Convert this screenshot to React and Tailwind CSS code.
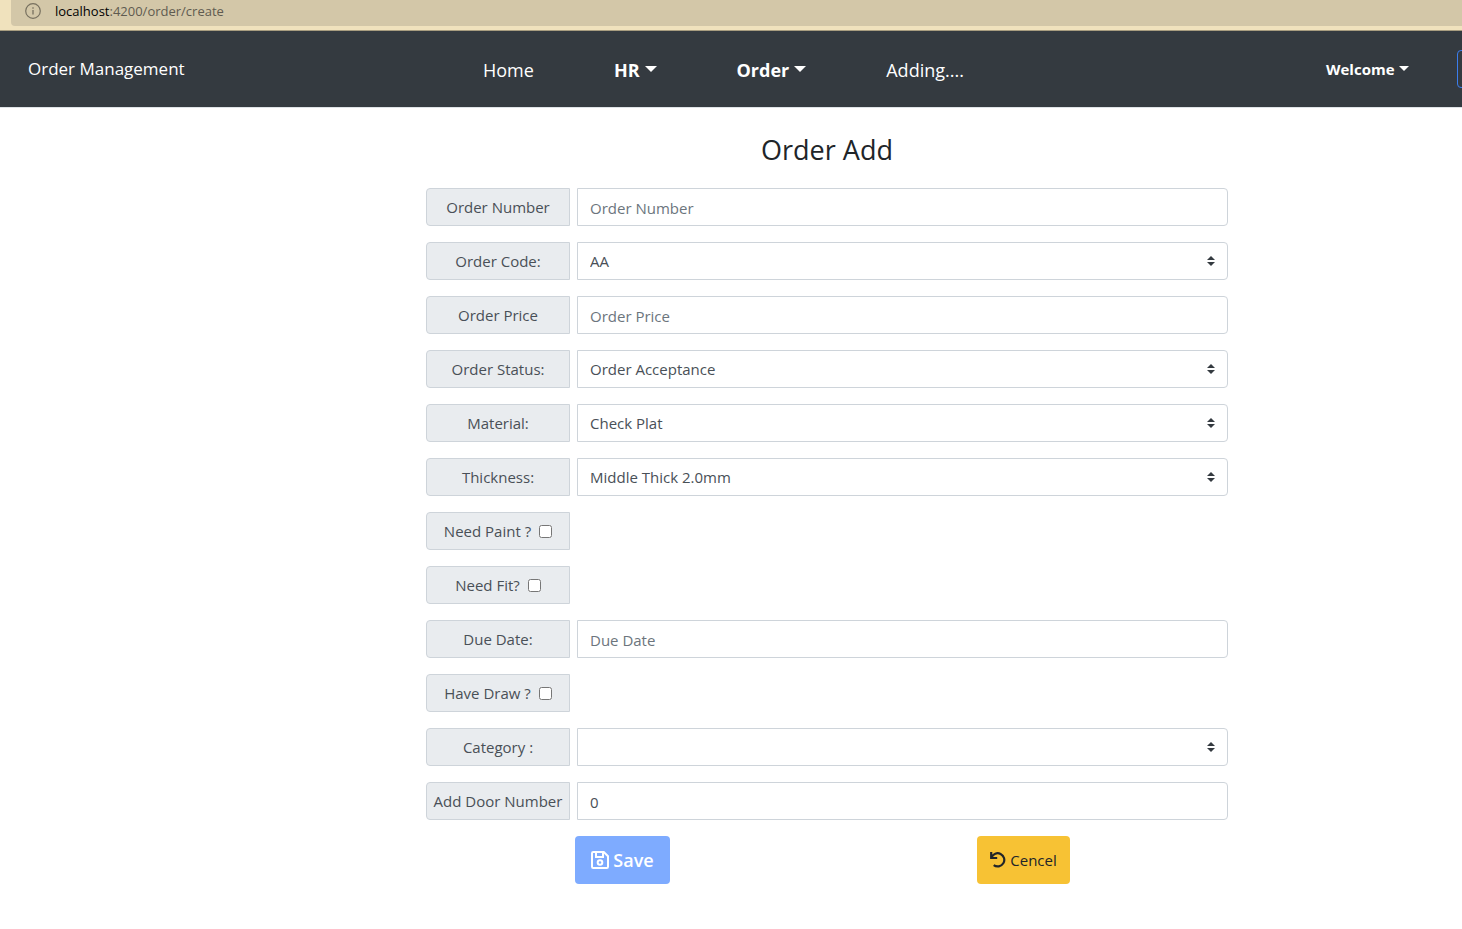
import React from "react";

const fields = [
  { id: "orderNumber", label: "Order Number", type: "text", placeholder: "Order Number" },
  { id: "orderCode", label: "Order Code:", type: "select", options: ["AA"] },
  { id: "orderPrice", label: "Order Price", type: "text", placeholder: "Order Price" },
  { id: "orderStatus", label: "Order Status:", type: "select", options: ["Order Acceptance"] },
  { id: "material", label: "Material:", type: "select", options: ["Check Plat"] },
  { id: "thickness", label: "Thickness:", type: "select", options: ["Middle Thick 2.0mm"] },
  { id: "needPaint", label: "Need Paint ?", type: "checkbox" },
  { id: "needFit", label: "Need Fit?", type: "checkbox" },
  { id: "dueDate", label: "Due Date:", type: "text", placeholder: "Due Date" },
  { id: "haveDraw", label: "Have Draw ?", type: "checkbox" },
  { id: "category", label: "Category :", type: "select", options: [""] },
  { id: "doorNumber", label: "Add Door Number", type: "text", value: "0" },
];

const labelClass =
  "flex h-full w-36 shrink-0 items-center justify-center whitespace-nowrap rounded-l border border-[#ced4da] bg-[#e9ecef] text-[#495057]";
const controlClass =
  "h-full w-full appearance-none rounded-r border border-[#ced4da] bg-white px-3 text-[#495057] placeholder:text-[#6c757d] placeholder:opacity-100";

function Caret({ className }) {
  return (
    <svg viewBox="0 0 10 5" className={className} fill="currentColor" aria-hidden="true">
      <path d="M0 0h10L5 5z" />
    </svg>
  );
}

function SaveIcon() {
  return (
    <svg viewBox="0 0 18 18" className="size-[18px]" fill="none" stroke="currentColor" strokeWidth="2" aria-hidden="true">
      <path d="M2.2 1h10.6L17 5.2v10.6a1.2 1.2 0 0 1-1.2 1.2H2.2A1.2 1.2 0 0 1 1 15.800V2.200A1.200 1.200 0 0 1 2.200 1z" />
      <path d="M5 1v5h7V1" />
      <circle cx="9" cy="11.500" r="2.300" />
    </svg>
  );
}

function UndoIcon() {
  return (
    <svg viewBox="0 0 16 16" className="size-4" fill="none" stroke="currentColor" strokeWidth="2.200" aria-hidden="true">
      <path d="M1.200 0v6h6" />
      <path d="M1.500 5.500A6.600 6.600 0 1 1 3.700 13.100" />
    </svg>
  );
}

function Field({ field }) {
  if (field.type === "checkbox") {
    return (
      <div className="flex h-[38px]">
        <label htmlFor={field.id} className={labelClass + " gap-2"}>
          {field.label}
          <input id={field.id} type="checkbox" className="size-[13px]" />
        </label>
      </div>
    );
  }
  return (
    <div className="flex h-[38px] gap-[7px]">
      <label htmlFor={field.id} className={labelClass}>{field.label}</label>
      <div className="relative flex-1">
        {field.type === "select" ? (
          <>
            <select id={field.id} className={controlClass}>
              {field.options.map((o) => <option key={o}>{o}</option>)}
            </select>
            <svg
              viewBox="0 0 4 5"
              className="pointer-events-none absolute right-[13px] top-1/2 h-[10px] w-2 -translate-y-1/2"
              fill="#343a40"
              aria-hidden="true"
            >
              <path d="M2 0L0 2h4zm0 5L0 3h4z" />
            </svg>
          </>
        ) : (
          <input
            id={field.id}
            type="text"
            placeholder={field.placeholder}
            defaultValue={field.value}
            className={controlClass + " pt-0.5"}
          />
        )}
      </div>
    </div>
  );
}

export default function App() {
  return (
    <div className="min-h-screen overflow-x-hidden bg-white font-['Open_Sans','Noto_Sans',sans-serif] text-[15px] text-[#212529]">
      <div className="h-[31px] border-b border-[#a89d80] bg-[#f0e2bd] pb-1 pl-[11px]">
        <div className="flex h-[26px] items-center gap-3.5 rounded-bl bg-[#d3c7a8] pb-1 pl-3.5 text-[13px] text-[#5f5b50]">
          <svg viewBox="0 0 16 16" className="size-4" fill="none" stroke="#77705f" aria-hidden="true">
            <circle cx="8" cy="8" r="7.3" strokeWidth="1.2" />
            <path d="M8 7v4.5M8 4.3v1.4" strokeWidth="1.3" />
          </svg>
          <span className="pt-0.5"><span className="text-black">localhost</span>:4200/order/create</span>
        </div>
      </div>

      <header className="grid h-[77px] grid-cols-[455fr_843fr_minmax(0,136fr)] items-center overflow-hidden border-b border-[#dee2e6] bg-[#343a40] pl-7 text-white">
        <a href="#" className="text-[17px]">Order Management</a>
        <nav className="flex items-center gap-20 pt-0.5 text-lg">
          <a href="#">Home</a>
          <button type="button" className="flex items-center gap-[5px] font-bold">
            HR <Caret className="mb-0.5 h-[6px] w-3" />
          </button>
          <button type="button" className="flex items-center gap-[5px] font-bold">
            Order <Caret className="mb-0.5 h-[6px] w-3" />
          </button>
          <a href="#">Adding....</a>
        </nav>
        <div className="flex items-center gap-12">
          <button type="button" className="flex shrink-0 items-center gap-1 font-bold">
            Welcome <Caret className="mb-0.5 h-[5px] w-[10px]" />
          </button>
          <button type="button" aria-label="Account" className="h-[38px] w-20 shrink-0 rounded border border-[#3b7ded]" />
        </div>
      </header>

      <main className="grid grid-cols-[426fr_802fr_234fr] pt-6">
        <form className="col-start-2 flex flex-col gap-4" onSubmit={(e) => e.preventDefault()}>
          <h1 className="text-center text-[27px] leading-9">Order Add</h1>
          <div className="flex flex-col gap-4 pt-1">
            {fields.map((field) => <Field key={field.id} field={field} />)}
          </div>
          <div className="-ml-1 mr-1 grid grid-cols-2 justify-items-center">
            <button type="submit" className="flex h-12 items-center gap-1 rounded bg-[#7eabff] px-4 text-lg font-semibold text-white">
              <SaveIcon /> Save
            </button>
            <button type="button" className="flex h-12 items-center gap-1 rounded bg-[#f7c234] px-[13px] text-[#212529]">
              <UndoIcon /> Cencel
            </button>
          </div>
        </form>
      </main>
    </div>
  );
}
